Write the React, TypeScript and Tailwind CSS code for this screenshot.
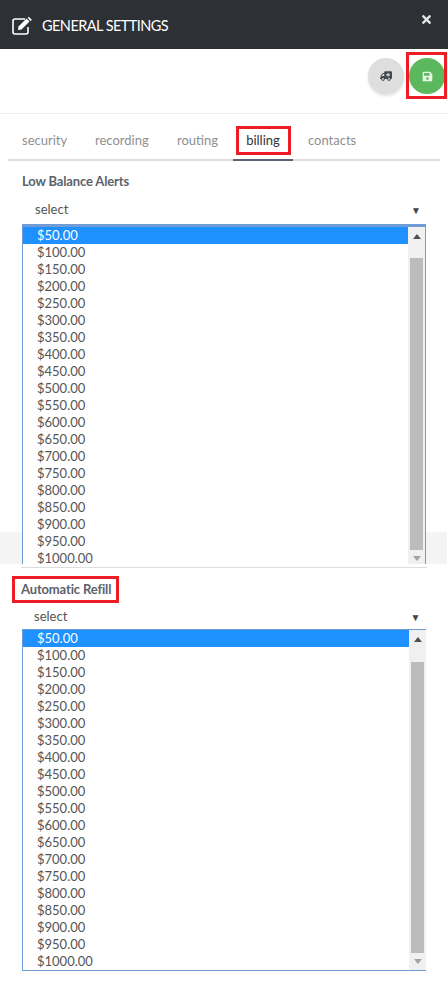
import React from "react";
import { FaTimes, FaAmbulance, FaSave } from "react-icons/fa";

const amounts = ["$50.00","$100.00","$150.00","$200.00","$250.00","$300.00","$350.00","$400.00","$450.00","$500.00","$550.00","$600.00","$650.00","$700.00","$750.00","$800.00","$850.00","$900.00","$950.00","$1000.00"];

function ListBox({ thumbClass, bottomBorder, rightBorder }: { thumbClass: string; bottomBorder: boolean; rightBorder: boolean }) {
  return (
    <div className={`flex bg-white border-l-[1.5px] border-[#6f9bd6] ${rightBorder ? "border-r" : ""} ${bottomBorder ? "border-b" : ""}`}>
      <div className="flex-1 min-w-0">
        {amounts.map((a, i) => (
          <div key={a} className={`h-[17px] leading-[16px] pl-[14px] text-[13px] ${i === 0 ? "bg-[#1e90ff] text-white" : "text-[#555]"}`}>{a}</div>
        ))}
      </div>
      <div className="w-[17px] bg-[#f0f0f0] flex flex-col items-center">
        <svg width="8" height="5" viewBox="0 0 8 5" className="mt-[7px] shrink-0"><path d="M0 5 L4 0 L8 5 Z" fill="#505050" /></svg>
        <div className={`w-[13px] flex-1 bg-[#bcbcbc] ${thumbClass} mb-[6px]`} />
        <svg width="8" height="5" viewBox="0 0 8 5" className="mb-[6px] shrink-0"><path d="M0 0 L4 5 L8 0 Z" fill="#a3a3a3" /></svg>
      </div>
    </div>
  );
}

export default function App() {
  return (
    <div className="w-[448px] h-[1002px] bg-white font-['Lato',sans-serif] overflow-hidden">
      <header className="h-[49px] bg-[#2d3035] flex items-center pl-[12px] pr-[15px] pt-[3px] text-white">
        <svg width="22" height="18" viewBox="0 0 22 18" className="shrink-0 -mt-[1px]" fill="none">
          <path d="M13 2 H3 Q1 2 1 4 V15 Q1 17 3 17 H14 Q16 17 16 15 V10" stroke="white" strokeWidth="1.6" />
          <path d="M6.5 9.5 L14.5 1.5 L17.5 4.5 L9.5 12.5 L6 13 Z" fill="white" />
          <path d="M15.5 0.6 L17 0 L20 3 L18.4 4 Z" fill="white" />
        </svg>
        <h1 className="ml-[8px] text-[14.5px] tracking-[-0.55px]">GENERAL SETTINGS</h1>
        <FaTimes className="ml-auto mb-[13px] text-[13px] text-[#e4e4e4]" />
      </header>

      <div className="h-[65px] border-b border-[#eeeeee] flex justify-end items-start pt-[9px] pr-[3px] gap-[5px]">
        <button className="w-[36px] h-[36px] rounded-full bg-[#dedede] shadow-[0_2px_3px_rgba(0,0,0,0.12)] flex items-center justify-center">
          <FaAmbulance className="text-[12px] text-[#444b55] -scale-x-100" />
        </button>
        <div className="relative">
          <button className="w-[36px] h-[36px] rounded-full bg-[#5cb85c] flex items-center justify-center">
            <FaSave className="text-[11px] text-[#e8f6e8]" />
          </button>
          <div className="absolute -left-[3px] -top-[6px] w-[41px] h-[47px] border-[3px] border-[#ee1c25]" />
        </div>
      </div>

      <nav className="mx-[8px] mt-[12px] h-[35px] border-b-2 border-[#dddddd] flex text-[13px] leading-[20px] text-[#8f8f8f]">
        <div className="pl-[14px] w-[87px] pt-[4px]">security</div>
        <div className="w-[82px] pt-[4px]">recording</div>
        <div className="w-[56px] pt-[4px]">routing</div>
        <div className="relative w-[60px] h-[35px] border-b-[2px] border-[#5a6474] pt-[4px] text-center text-[#333]">
          billing
          <div className="absolute left-[3px] top-0 w-[55px] h-[29px] border-[3px] border-[#ee1c25]" />
        </div>
        <div className="ml-[15px] pt-[4px]">contacts</div>
      </nav>

      <section className="px-[22px]">
        <div className="pt-[10px] h-[35px] text-[13px] leading-[20px] font-bold text-[#5c626b] tracking-[-0.15px]">Low Balance Alerts</div>
        <div className="h-[28px] flex items-center pl-[13px] pr-[5px] text-[13px] text-[#555] justify-between">
          <span>select</span>
          <span className="text-[10px] text-[#444]">▼</span>
        </div>
        <div className="relative">
          <div className="absolute -left-[22px] -right-[21px] bottom-0 h-[32px] bg-[#f4f4f4]" />
          <div className="relative border-t-[3px] border-[#6f9bd6] h-[340px] overflow-hidden">
            <ListBox thumbClass="mt-[19px]" bottomBorder={false} rightBorder />
          </div>
        </div>
      </section>

      <hr className="mx-[21px] mt-[3px] border-0 border-t border-[#dddddd]" />

      <section className="px-[22px]">
        <div className="-ml-[1px] mt-[8px] relative w-fit h-[27px] leading-[26px] text-[13px] font-bold text-[#5c626b] tracking-[-0.15px]">
          Automatic Refill
          <div className="absolute -left-[9px] top-0 w-[107px] h-[27px] border-[3px] border-[#ee1c25]" />
        </div>
        <div className="h-[25px] mt-[1px] pt-[1px] flex items-center pl-[12px] pr-[5.5px] text-[13px] text-[#555] justify-between">
          <span>select</span>
          <span className="text-[10px] text-[#444]">▼</span>
        </div>
        <div className="border-t border-[#6f9bd6]">
          <ListBox thumbClass="mt-[20px]" bottomBorder rightBorder={false} />
        </div>
      </section>
    </div>
  );
}
